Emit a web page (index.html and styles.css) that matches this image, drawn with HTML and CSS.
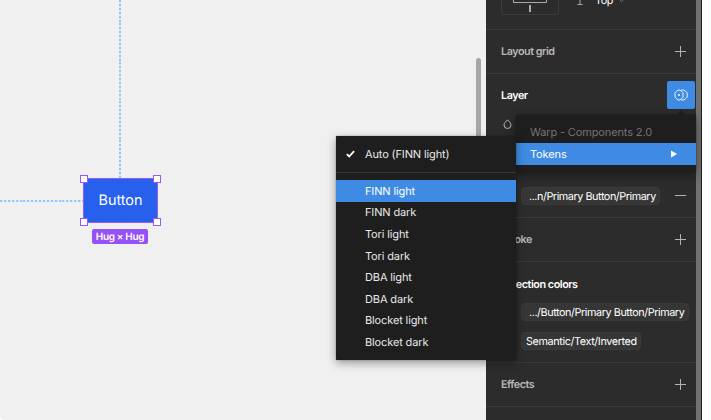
FILE: index.html
```html
<!DOCTYPE html>
<html lang="en">
<head>
<meta charset="utf-8">
<title>Design editor</title>
<link rel="stylesheet" href="styles.css">
</head>
<body>
<div class="editor">
  <main class="canvas">
    <div class="guide guide-v"></div>
    <div class="guide guide-h"></div>
    <div class="node">Button
      <i class="handle nw"></i><i class="handle ne"></i><i class="handle sw"></i><i class="handle se"></i>
    </div>
    <div class="size-badge">Hug × Hug</div>
    <div class="canvas-scroll"></div>
  </main>
  <aside class="panel">
    <div class="sections">
      <section class="align">
        <svg class="align-box" width="58" height="15" viewBox="0 0 58 15"><path d="M.5 0v12.5a2 2 0 0 0 2 2h53a2 2 0 0 0 2-2V0" fill="none" stroke="#3c3c3c"/><path d="M12.5 0v2.5h33V0" fill="none" stroke="#aaa"/><path d="M28 5h2v7h-2z" fill="#aaa"/></svg>
        <svg class="align-icon" width="6" height="6" viewBox="0 0 6 6"><path d="M3 0v4.5M.5 4.5h5" fill="none" stroke="#aaa"/></svg>
        <span class="align-value">Top</span>
        <svg class="chevron" width="5" height="4" viewBox="0 0 5 4"><path d="M.5.7l2 2 2-2" fill="none" stroke="#777"/></svg>
      </section>
      <section class="row">
        <h2 class="dim">Layout grid</h2>
        <svg class="plus" viewBox="0 0 11 11"><path d="M5.5 0v11M0 5.5h11"/></svg>
      </section>
      <section class="layer">
        <div class="layer-head">
          <h2>Layer</h2>
          <button class="mode" aria-label="Variable mode"><svg width="14" height="12" viewBox="0 0 14 12"><path d="M3 1.8L5 .8l2.2 1 1.8 2v4.4l-1.8 2-2.2 1-2-1-2-2V3.8zM7.2 1.2L8.8.8l2.4 1.1 2 2v4.2l-2 2-2.4 1.1-1.6-.4" fill="none" stroke="#e8f2fc"/><circle cx="5" cy="6" r="1" fill="#fff"/></svg></button>
        </div>
        <svg class="drop" width="9" height="10" viewBox="0 0 9 10"><path d="M4.5.8C3.1 2.5 1 4 1 6a3.4 3.4 0 0 0 7 0C8 4 5.9 2.5 4.5.8z" fill="none" stroke="#bbb"/></svg>
      </section>
      <section class="fill">
        <span class="chip chip-fill">...n/Primary Button/Primary</span>
        <svg class="plus" viewBox="0 0 11 11"><path d="M0 5.5h11"/></svg>
      </section>
      <section class="row">
        <h2 class="dim">Stroke</h2>
        <svg class="plus" viewBox="0 0 11 11"><path d="M5.5 0v11M0 5.5h11"/></svg>
      </section>
      <section class="selection">
        <h2 class="sel-title">Selection colors</h2>
        <span class="chip chip-button">.../Button/Primary Button/Primary</span>
        <span class="chip chip-text">Semantic/Text/Inverted</span>
      </section>
      <section class="row">
        <h2 class="dim">Effects</h2>
        <svg class="plus" viewBox="0 0 11 11"><path d="M5.5 0v11M0 5.5h11"/></svg>
      </section>
    </div>
    <div class="panel-scroll"></div>
  </aside>
  <div class="menu menu-library">
    <div class="item muted">Warp - Components 2.0</div>
    <div class="item active">Tokens<svg width="6" height="8" viewBox="0 0 6 8"><path d="M0 .5l6 3.5-6 3.5z" fill="#fff"/></svg></div>
  </div>
  <div class="menu menu-modes">
    <div class="item auto"><svg class="check" width="9" height="8" viewBox="0 0 9 8"><path d="M.8 4.2l2.4 2.3L8.1 1.2" fill="none" stroke="#fff" stroke-width="1.8"/></svg>Auto (FINN light)</div>
    <div class="divider"></div>
    <div class="item active">FINN light</div>
    <div class="item">FINN dark</div>
    <div class="item">Tori light</div>
    <div class="item">Tori dark</div>
    <div class="item">DBA light</div>
    <div class="item">DBA dark</div>
    <div class="item">Blocket light</div>
    <div class="item">Blocket dark</div>
  </div>
</div>
</body>
</html>
```
FILE: styles.css
```css
* { box-sizing: border-box; }
body { margin: 0; background: #fff; font-family: Inter, sans-serif; font-size: 10.8px; letter-spacing: -.37px; overflow: hidden; text-rendering: geometricPrecision; }
.editor { position: relative; display: flex; width: 702px; height: 420px; overflow: hidden; border-bottom-left-radius: 4px; }
.canvas { position: relative; width: 486px; background: #f0f0f0; }
.guide { position: absolute; }
.guide-v { left: 119px; top: 0; width: 2px; height: 178px; background: repeating-linear-gradient(#92c8fa 0 2px, #cfe3f5 2px 3px, #e8eef2 3px 3.9px); }
.guide-h { left: 0; top: 200px; width: 83px; height: 2px; background: repeating-linear-gradient(90deg, #92c8fa 0 2px, #cfe3f5 2px 3px, #e8eef2 3px 3.9px); }
.node { position: absolute; left: 83px; top: 178px; width: 75px; height: 45px; border: 1px solid #955bf1; border-radius: 6px; background: #2760ed; color: #fff; font-size: 14.4px; letter-spacing: 0; line-height: 44px; text-align: center; }
.handle { position: absolute; width: 8px; height: 8px; background: #fff; border: 1px solid #9a59f7; }
.nw { left: -4px; top: -4px; }
.ne { right: -4px; top: -4px; }
.sw { left: -4px; bottom: -4px; }
.se { right: -4px; bottom: -4px; }
.size-badge { position: absolute; left: 92px; top: 229px; width: 56px; height: 15px; border-radius: 2px; background: #9550f6; color: #fff; font-size: 10px; letter-spacing: -.35px; font-weight: 600; line-height: 16px; text-align: center; white-space: nowrap; }
.canvas-scroll { position: absolute; left: 476px; top: 58px; width: 5px; height: 140px; border-radius: 3px; background: #a6a6a6; }
.panel { display: flex; width: 216px; background: #2c2c2c; color: #fff; border-right: 1px solid #1e1e1e; }
.sections { width: 210px; }
.sections section { border-bottom: 1px solid #393939; }
.panel-scroll { width: 5px; background: #707070; }
h2 { margin: 0; font-size: 10.8px; font-weight: 600; letter-spacing: -.46px; line-height: 17px; }
.dim { color: #b8b8b8; }
.align { display: flex; height: 30px; padding-left: 15px; align-items: flex-start; }
.align-icon { margin-left: 18px; }
.align-value { margin-left: 12px; margin-top: -8px; line-height: 17px; }
.chevron { margin: -1px 0 0 6px; }
.row { display: flex; height: 44px; align-items: center; justify-content: space-between; padding: 0 10px 0 15px; }
.plus { width: 11px; height: 11px; stroke: #b3b3b3; fill: none; }
.layer { height: 72px; }
.layer-head { display: flex; justify-content: space-between; align-items: center; height: 42px; padding: 0 1px 0 15px; }
.mode { display: flex; align-items: center; justify-content: center; width: 28px; height: 28px; padding: 0; border: 0; border-radius: 2px; background: #3f8be3; }
.drop { display: block; margin: 3px 0 0 17px; }
.fill { display: flex; align-items: flex-end; justify-content: space-between; height: 72px; padding: 0 10px 12px 35px; }
.fill .plus { margin-bottom: 4px; }
.chip { display: block; height: 18px; padding-left: 4px; border: 1px solid #3b3b3b; border-radius: 4px; background: #363636; line-height: 17px; white-space: nowrap; }
.chip-fill { width: 139px; padding-left: 7px; letter-spacing: -.44px; }
.selection { height: 101px; padding: 14px 0 0 35px; }
.sel-title { margin-left: -20px; }
.chip-button { width: 168px; margin-top: 10px; padding-left: 7px; letter-spacing: -.42px; }
.chip-text { width: 120px; margin-top: 11px; }
.menu { position: absolute; background: #1e1e1e; color: #e8e8e8; box-shadow: 0 3px 10px rgba(0, 0, 0, .38), 0 0 1px rgba(0, 0, 0, .7); }
.menu-library { left: 516px; top: 115px; width: 180px; height: 57px; padding-top: 6px; }
.menu-library::before { content: ""; position: absolute; right: 10px; top: -5px; border: 5px solid transparent; border-top: 0; border-bottom-color: #1e1e1e; }
.menu-modes { left: 336px; top: 136px; width: 180px; height: 224px; padding-top: 7px; border-radius: 1px; }
.item { display: flex; align-items: center; height: 21.6px; padding-left: 29px; font-size: 11px; letter-spacing: -.13px; white-space: nowrap; }
.menu-library .item { height: 22px; padding: 0 19px 0 14px; justify-content: space-between; }
.item.muted { color: #747474; }
.item.active { color: #fff; background: #3f8be3; }
.menu-modes .auto { padding-left: 10px; }
.check { margin-right: 10px; }
.divider { height: 1px; margin: 7px 0 7.4px; background: #393939; }
```
